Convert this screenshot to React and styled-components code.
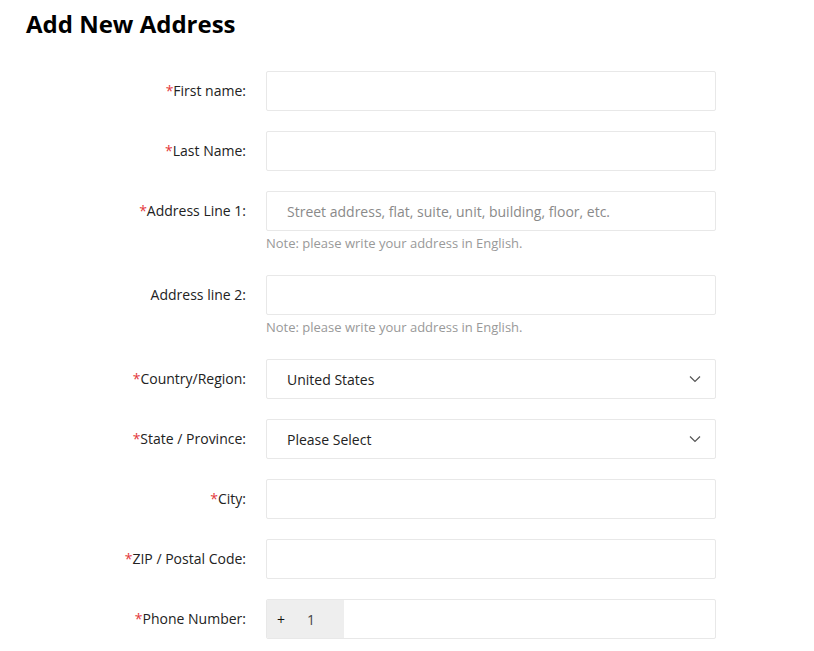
import React from "react";
import styled, { createGlobalStyle } from "styled-components";

const Global = createGlobalStyle`
  html, body { margin: 0; padding: 0; background: #fff; }
  body { font-family: "Open Sans", "Noto Sans", sans-serif; color: #222; }
`;

const Page = styled.div`
  padding: 8px 26px 20px;
`;

const Title = styled.h1`
  margin: 0 0 31px;
  font-size: 24px;
  font-weight: 700;
  line-height: 32px;
  color: #000;
`;

const Form = styled.div`
  display: flex;
  flex-direction: column;
  gap: 20px;
`;

const Row = styled.div`
  display: grid;
  grid-template-columns: 220px 450px;
  column-gap: 20px;
  align-items: start;
`;

const Label = styled.label`
  text-align: right;
  font-size: 14px;
  line-height: 40px;
  color: #222;
  white-space: nowrap;
`;

const Star = styled.span`
  color: #e4393c;
`;

const Field = styled.div`
  display: flex;
  flex-direction: column;
`;

const Box = styled.div`
  height: 40px;
  box-sizing: border-box;
  border: 1px solid #e8e8e8;
  border-radius: 2px;
  display: flex;
  align-items: center;
  font-size: 14px;
  color: #222;
  overflow: hidden;
`;

const Text = styled.span`
  flex: 1;
  padding-left: 20px;
  color: ${(p) => (p.$placeholder ? "#8a8a8a" : "#222")};
`;

const Chevron = styled.svg`
  width: 12px;
  height: 8px;
  margin-right: 14px;
`;

const Note = styled.div`
  font-size: 13px;
  line-height: 24px;
  color: #999;
`;

const Prefix = styled.div`
  width: 77px;
  height: 100%;
  background: #eeeeee;
  display: flex;
  align-items: center;
  font-size: 14px;
  color: #444;
`;

const Plus = styled.span`
  margin-left: 10px;
  width: 30px;
  color: #111;
`;

const ChevronIcon = () => (
  <Chevron viewBox="0 0 12 8">
    <path d="M1 1.5 L6 6.5 L11 1.5" fill="none" stroke="#555" strokeWidth="1.2" />
  </Chevron>
);

const NOTE = "Note: please write your address in English.";

function FormRow({ label, required, children, note }) {
  return (
    <Row>
      <Label>
        {required && <Star>*</Star>}
        {label}
      </Label>
      <Field>
        {children}
        {note && <Note>{note}</Note>}
      </Field>
    </Row>
  );
}

export default function App() {
  return (
    <Page>
      <Global />
      <Title>Add New Address</Title>
      <Form>
        <FormRow label="First name:" required>
          <Box />
        </FormRow>
        <FormRow label="Last Name:" required>
          <Box />
        </FormRow>
        <FormRow label="Address Line 1:" required note={NOTE}>
          <Box>
            <Text $placeholder>Street address, flat, suite, unit, building, floor, etc.</Text>
          </Box>
        </FormRow>
        <FormRow label="Address line 2:" note={NOTE}>
          <Box />
        </FormRow>
        <FormRow label="Country/Region:" required>
          <Box>
            <Text>United States</Text>
            <ChevronIcon />
          </Box>
        </FormRow>
        <FormRow label="State / Province:" required>
          <Box>
            <Text>Please Select</Text>
            <ChevronIcon />
          </Box>
        </FormRow>
        <FormRow label="City:" required>
          <Box />
        </FormRow>
        <FormRow label="ZIP / Postal Code:" required>
          <Box />
        </FormRow>
        <FormRow label="Phone Number:" required>
          <Box>
            <Prefix>
              <Plus>+</Plus>1
            </Prefix>
          </Box>
        </FormRow>
      </Form>
    </Page>
  );
}
